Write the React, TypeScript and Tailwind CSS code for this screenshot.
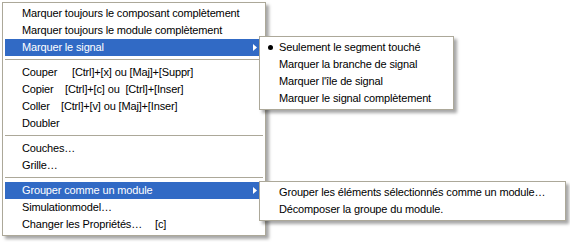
import React from "react";

const font = { fontFamily: '"Liberation Sans", Arial, sans-serif' };

function Row({
  children,
  active = false,
  arrow = false,
  bullet = false,
}: {
  children: React.ReactNode;
  active?: boolean;
  arrow?: boolean;
  bullet?: boolean;
}) {
  return (
    <div
      className={
        "relative flex h-[17px] items-center pl-[17px] pr-[20px] whitespace-pre " +
        (active ? "bg-[#316ac5] text-white" : "text-black")
      }
    >
      {bullet && (
        <span className="absolute left-[6px] top-[6px] h-[5px] w-[5px] rounded-full bg-black" />
      )}
      {children}
      {arrow && (
        <svg
          className="absolute right-[6px] top-[5px]"
          width="4"
          height="7"
          viewBox="0 0 4 7"
        >
          <path d="M0 0 L4 3.5 L0 7 Z" fill={active ? "#ffffff" : "#000000"} />
        </svg>
      )}
    </div>
  );
}

function Sep() {
  return (
    <div className="flex h-[8px] flex-col justify-start pt-[3px]">
      <div className="h-px bg-[#aca899]" />
      <div className="h-px bg-white" />
    </div>
  );
}

export default function App() {
  return (
    <div className="h-[242px] w-[570px] bg-white text-[11px] tracking-[-0.15px]" style={font}>
      <div className="relative ml-[2px] pt-[2px]">
        <div className="relative w-[264px] border border-[#aca899] bg-white p-[2px] shadow-[3px_3px_3px_rgba(0,0,0,0.35)]">
          <Row>Marquer toujours le composant complètement</Row>
          <Row>Marquer toujours le module complètement</Row>
          <Row active arrow>
            Marquer le signal
          </Row>
          <Sep />
          <Row>
            <span className="inline-block w-[50px]">Couper</span>
            [Ctrl]+[x] ou [Maj]+[Suppr]
          </Row>
          <Row>
            <span className="inline-block w-[43px]">Copier</span>
            [Ctrl]+[c] ou  [Ctrl]+[Inser]
          </Row>
          <Row>
            <span className="inline-block w-[39px]">Coller</span>
            [Ctrl]+[v] ou [Maj]+[Inser]
          </Row>
          <Row>Doubler</Row>
          <Sep />
          <Row>Couches…</Row>
          <Row>Grille…</Row>
          <Sep />
          <Row active arrow>
            Grouper comme un module
          </Row>
          <Row>Simulationmodel…</Row>
          <Row>
            <span className="inline-block w-[133px]">Changer les Propriétés…</span>
            [c]
          </Row>
        </div>

        <div className="absolute left-[257px] top-[36px] w-[195px] border border-[#aca899] bg-white p-[2px] shadow-[3px_3px_3px_rgba(0,0,0,0.35)]">
          <Row bullet>Seulement le segment touché</Row>
          <Row>Marquer la branche de signal</Row>
          <Row>Marquer l'île de signal</Row>
          <Row>Marquer le signal complètement</Row>
        </div>

        <div className="absolute left-[257px] top-[181px] w-[307px] border border-[#aca899] bg-white p-[2px] shadow-[3px_3px_3px_rgba(0,0,0,0.35)]">
          <Row>Grouper les éléments sélectionnés comme un module…</Row>
          <Row>Décomposer la groupe du module.</Row>
        </div>
      </div>
    </div>
  );
}
